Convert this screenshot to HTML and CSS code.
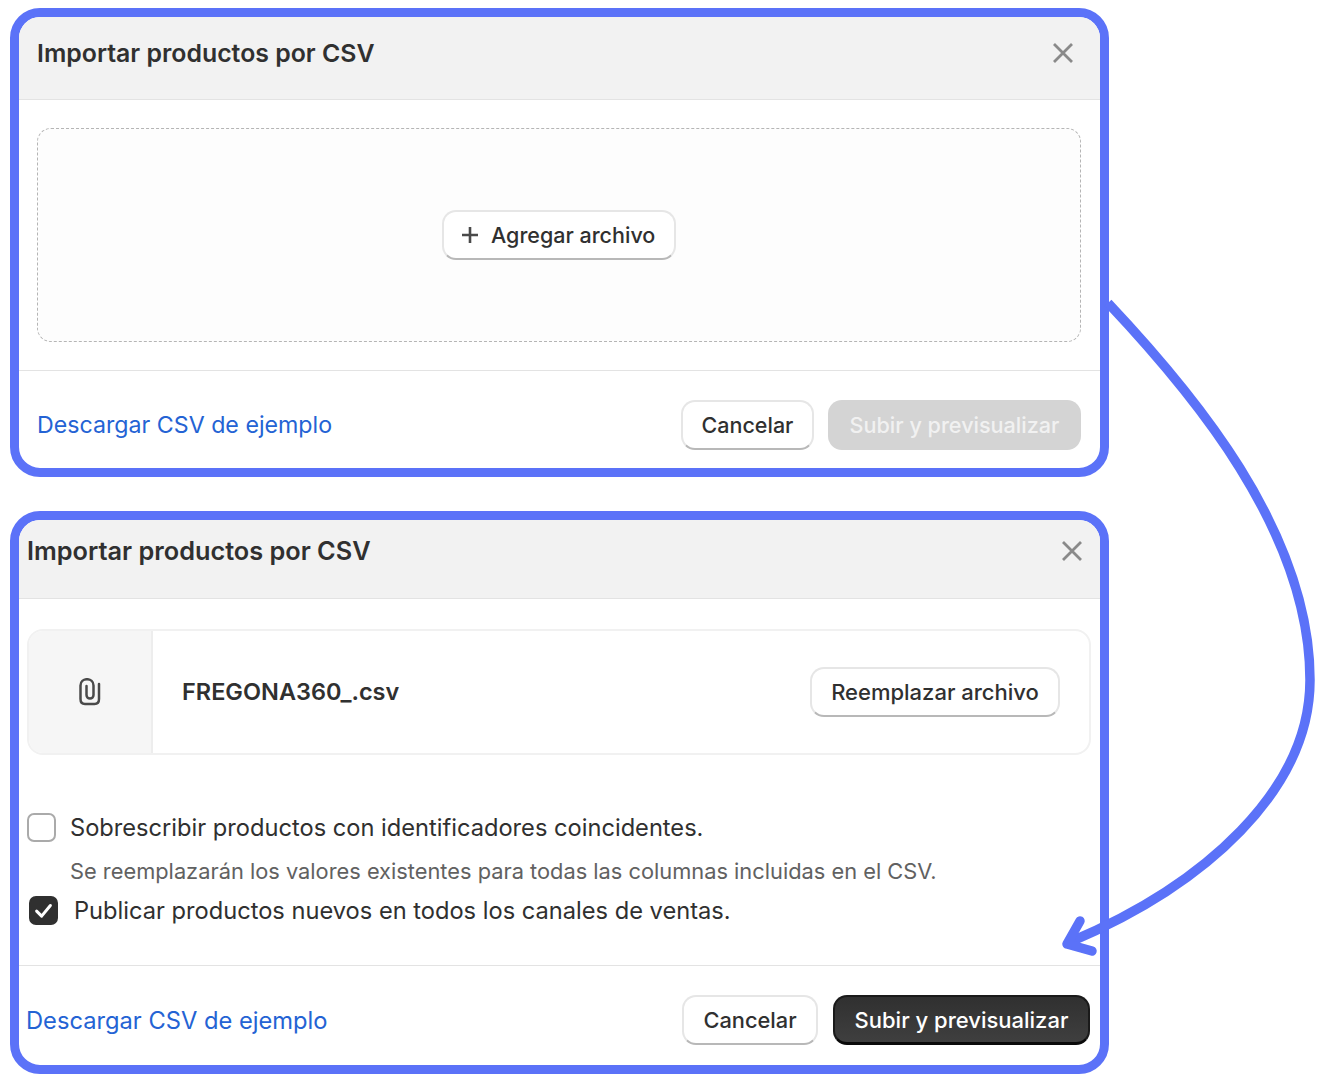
FILE: index.html
```html
<!DOCTYPE html>
<html lang="es">
<head>
    <meta charset="UTF-8">
    <meta name="viewport" content="width=device-width, initial-scale=1.0">
    <title>Importar productos por CSV</title>
    <link rel="stylesheet" href="styles.css">
</head>
<body>

    <div class="stage">
        <section class="modal modal-empty">
            <header class="modal-head">
                <h2>Importar productos por CSV</h2>
                <svg class="close" viewBox="0 0 20 20"><path d="M1 1L19 19M19 1L1 19"/></svg>
            </header>
            <div class="modal-body">
                <div class="dropzone">
                    <button class="btn btn-add">
                        <svg class="plus" viewBox="0 0 18 18"><path d="M9 1V17M1 9H17"/></svg>
                        Agregar archivo
                    </button>
                </div>
            </div>
            <footer class="modal-foot">
                <a class="link">Descargar CSV de ejemplo</a>
                <div class="actions">
                    <button class="btn btn-cancel">Cancelar</button>
                    <button class="btn btn-disabled">Subir y previsualizar</button>
                </div>
            </footer>
        </section>

        <section class="modal modal-filled">
            <header class="modal-head">
                <h2>Importar productos por CSV</h2>
                <svg class="close" viewBox="0 0 20 20"><path d="M1 1L19 19M19 1L1 19"/></svg>
            </header>
            <div class="modal-body">
                <div class="file-card">
                    <div class="file-icon">
                        <svg class="clip" viewBox="0 0 22 28"><path d="M20 6V21C20 24 18.5 26 15.5 26H6C3 26 1.5 24 1.5 21V7.5C1.5 3.7 4.4 1.2 8 1.2C11.6 1.2 14.5 3.7 14.5 7.5V17C14.5 19 13 20.5 11 20.5C9 20.5 7.5 19 7.5 17V8"/></svg>
                    </div>
                    <div class="file-name">FREGONA360_.csv</div>
                    <button class="btn btn-replace">Reemplazar archivo</button>
                </div>
                <div class="option option-first">
                    <span class="check"></span>
                    <span class="option-label">Sobrescribir productos con identificadores coincidentes.</span>
                </div>
                <p class="hint">Se reemplazarán los valores existentes para todas las columnas incluidas en el CSV.</p>
                <div class="option option-second">
                    <span class="check check-on">
                        <svg viewBox="0 0 20 20"><path d="M4.5 10.5L8.5 14.5L15.5 6"/></svg>
                    </span>
                    <span class="option-label">Publicar productos nuevos en todos los canales de ventas.</span>
                </div>
            </div>
            <footer class="modal-foot">
                <a class="link">Descargar CSV de ejemplo</a>
                <div class="actions">
                    <button class="btn btn-cancel">Cancelar</button>
                    <button class="btn btn-primary">Subir y previsualizar</button>
                </div>
            </footer>
        </section>

        <svg class="arrow" viewBox="0 0 1332 1086">
            <path class="arrow-line" d="M1108 303C1190 390 1310 530 1310 680C1310 790 1205 885 1070 942"/>
            <path class="arrow-head" d="M1080 921L1067 944L1092 951"/>
        </svg>
    </div>

</body>
</html>
```

FILE: styles.css
```css
* {
    box-sizing: border-box;
}
body {
    margin: 0;
    background: #fff;
    font-family: Inter, "Noto Sans", sans-serif;
    color: #303030;
}
.stage {
    position: relative;
    width: 1332px;
    height: 1086px;
    padding: 8px 0 0 10px;
}
.modal {
    width: 1099px;
    border: 9px solid #5b72f8;
    border-radius: 30px;
    background: #fff;
    overflow: hidden;
}
.modal-empty {
    height: 469px;
    margin-bottom: 34px;
}
.modal-filled {
    height: 563px;
}
.modal-head {
    display: flex;
    justify-content: space-between;
    align-items: center;
    height: 83px;
    padding: 0 27px 10px 18px;
    background: #f2f2f2;
    border-bottom: 1px solid #e3e3e3;
}
.modal-filled .modal-head {
    height: 79px;
    padding: 0 18px 17px 8px;
}
h2 {
    margin: 0;
    font-size: 24.85px;
    font-weight: 600;
}
.modal-filled h2 {
    font-size: 25.3px;
}
.close {
    width: 20px;
    height: 20px;
    fill: none;
    stroke: #8a8a8a;
    stroke-width: 2.8;
}
.modal-body {
    padding: 28px 19px 28px 18px;
}
.modal-empty .modal-body {
    height: 271px;
    border-bottom: 1px solid #e3e3e3;
}
.modal-filled .modal-body {
    height: 367px;
    padding: 30px 10px 0 8px;
    border-bottom: 1px solid #e3e3e3;
}
.dropzone {
    display: flex;
    justify-content: center;
    align-items: center;
    height: 214px;
    background: #fdfdfd;
    border: 1px dashed #b5b5b5;
    border-radius: 14px;
}
.btn {
    font-family: inherit;
    font-size: 22px;
    font-weight: 500;
    color: #303030;
    height: 50px;
    background: #fff;
    border: 2px solid #e6e6e6;
    border-bottom-color: #b8b8b8;
    border-radius: 14px;
}
.btn-add {
    display: flex;
    align-items: center;
    gap: 12px;
    width: 234px;
    padding: 0 0 0 17px;
    font-size: 21.5px;
}
.plus {
    width: 18px;
    height: 18px;
    fill: none;
    stroke: #4a4a4a;
    stroke-width: 2.6;
}
.modal-foot {
    display: flex;
    justify-content: space-between;
    align-items: center;
    padding: 10px 19px 0 18px;
    height: 97px;
}
.modal-filled .modal-foot {
    padding: 9px 10px 0 7px;
    height: 99px;
}
.link {
    font-size: 23.2px;
    color: #2463d4;
}
.modal-filled .link {
    font-size: 23.7px;
}
.actions {
    display: flex;
    gap: 14px;
}
.modal-filled .actions {
    gap: 15px;
}
.btn-cancel {
    width: 133px;
    font-size: 21.5px;
}
.modal-filled .btn-cancel {
    width: 136px;
    font-size: 21.8px;
}
.btn-disabled {
    width: 253px;
    font-size: 21.6px;
    color: #f1f1f1;
    background: #d4d4d4;
    border: none;
}
.btn-primary {
    width: 257px;
    color: #fff;
    background: linear-gradient(#303030, #3f3f3f);
    border: 2px solid #1a1a1a;
    border-bottom: 3px solid #0a0a0a;
}
.file-card {
    display: flex;
    align-items: center;
    height: 126px;
    margin-right: -1px;
    border: 2px solid #f1f1f1;
    border-radius: 16px;
    overflow: hidden;
    padding-right: 29px;
}
.file-icon {
    display: flex;
    justify-content: center;
    align-items: center;
    width: 124px;
    height: 100%;
    background: #f6f6f6;
    border-right: 2px solid #ededed;
}
.clip {
    width: 22px;
    height: 28px;
    fill: none;
    stroke: #4a4a4a;
    stroke-width: 2.5;
    stroke-linecap: round;
}
.file-name {
    flex: 1;
    padding: 0 0 2px 29px;
    font-size: 23.5px;
    font-weight: 600;
}
.btn-replace {
    width: 250px;
}
.option {
    display: flex;
    align-items: center;
    font-size: 23.65px;
}
.option-first {
    gap: 14px;
    margin-top: 58px;
}
.option-second {
    gap: 16px;
    margin-top: 12px;
    margin-left: 2px;
}
.check {
    display: flex;
    width: 29px;
    height: 29px;
    background: #fff;
    border: 2px solid #aaa;
    border-radius: 7px;
}
.check-on {
    background: #303030;
    border-color: #303030;
}
.check-on svg {
    fill: none;
    stroke: #fff;
    stroke-width: 2.4;
    stroke-linecap: round;
    stroke-linejoin: round;
}
.hint {
    margin: 16px 0 0 43px;
    font-size: 21.82px;
    color: #616161;
}
.arrow {
    position: absolute;
    left: 0;
    top: 0;
    width: 1332px;
    height: 1086px;
    fill: none;
    stroke: #5b72f8;
    pointer-events: none;
}
.arrow-line {
    stroke-width: 9.5;
}
.arrow-head {
    stroke-width: 9.5;
    stroke-linecap: round;
    stroke-linejoin: round;
}
```
